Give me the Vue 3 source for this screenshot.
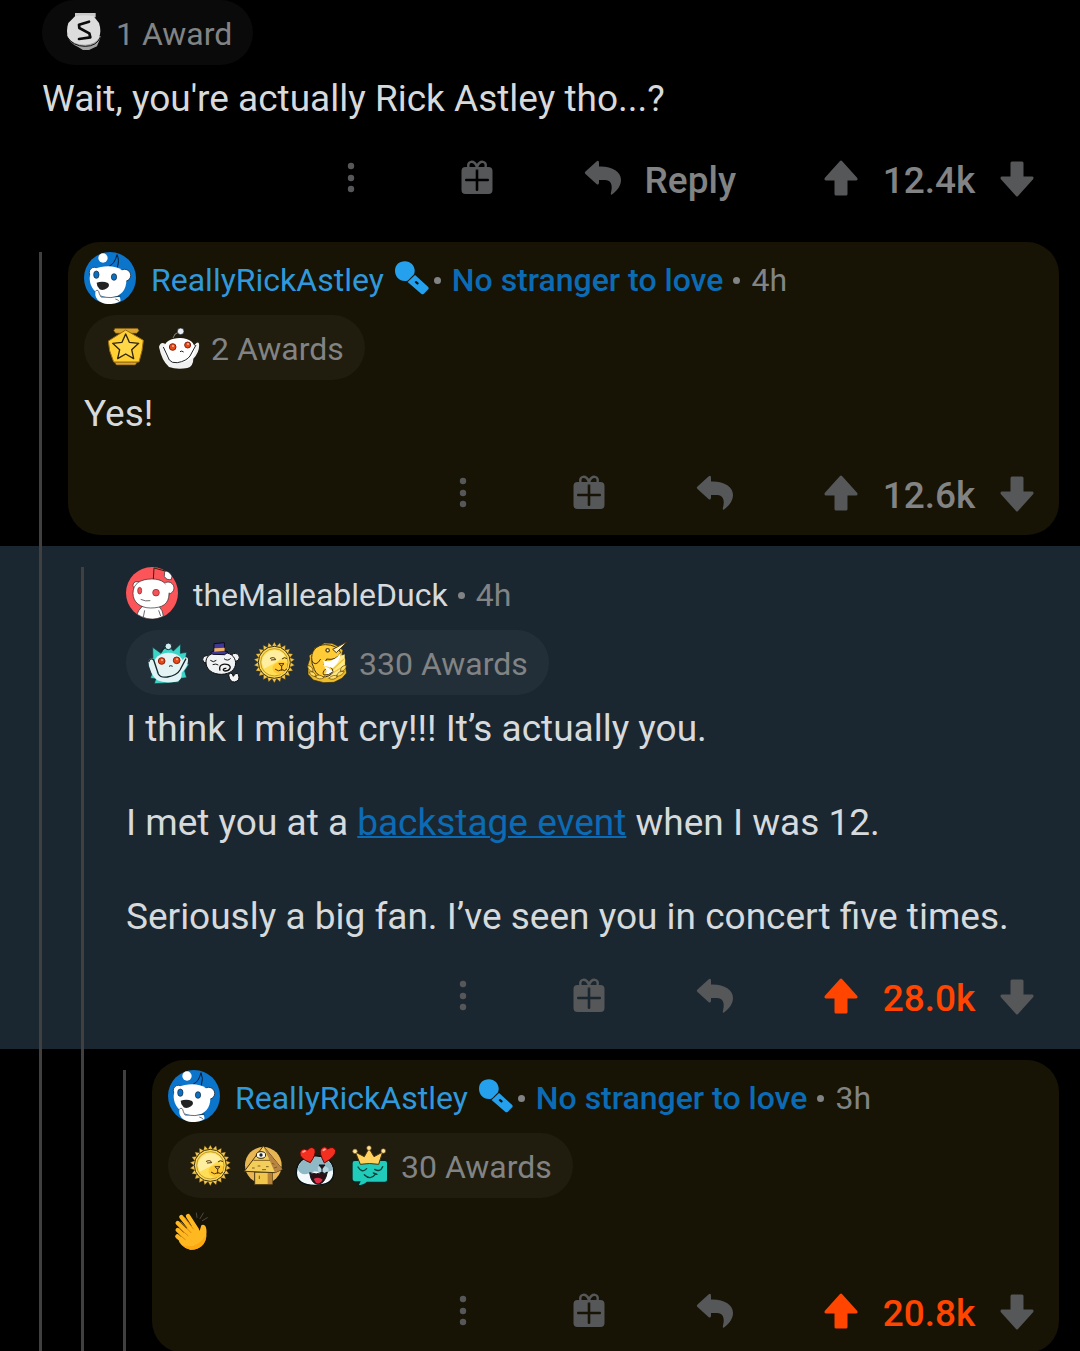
<template>
  <svg class="sprite" aria-hidden="true">
    <symbol id="dots" viewBox="0 0 42 42">
      <circle cx="21" cy="9" r="3.2" /><circle cx="21" cy="21" r="3.2" /><circle cx="21" cy="32" r="3.2" />
    </symbol>
    <symbol id="gift" viewBox="0 0 42 42">
      <path d="M12.5 11c-2-8 6-8 8.5-1 2.5-7 10.5-7 8.5 1" fill="none" stroke="currentColor" stroke-width="2.5" />
      <path fill-rule="evenodd" d="M9.500 10h23q4 0 4 4v19q0 4-4 4h-23q-4 0-4-4V14q0-4 4-4zM19.700 13v8.700H10q-1 0-1 1.300t1 1.300h9.700V33q0 1 1.300 1t1.300-1v-8.700H32q1 0 1-1.300t-1-1.300h-9.700V13q0-1-1.300-1t-1.300 1z" />
    </symbol>
    <symbol id="reply" viewBox="0 0 42 42">
      <path d="M3.500 14.500 14.500 4.500q2.500-2 2.500 1.500v3.500c13-.5 22 5 22 13.500 0 5-3 10-9 14.500q-1.500.6-1.200-1c1.500-5.500 2.200-13-5.500-13.500H17V26q-.5 2.500-2.500 1L3.500 17q-1.500-1.200 0-2.500z" />
    </symbol>
    <symbol id="up" viewBox="0 0 42 42">
      <path d="M20 4q1-1 2 0L37.300 21q.8 2.500-1.300 2.500H27.500V37q0 1.500-1.500 1.500H16q-1.500 0-1.500-1.500V23.500H6Q4 23.500 4.700 21z" />
    </symbol>
    <symbol id="down" viewBox="0 0 42 42">
      <path d="M20 39q1 1 2 0L37.300 22q.8-2.500-1.300-2.500H27.500V6q0-1.500-1.500-1.500H16q-1.500 0-1.500 1.500V19.500H6Q4 19.500 4.700 22z" />
    </symbol>
    <symbol id="mic" viewBox="0 0 100 100">
      <path d="M29 1c17 0 29 13 29 28 0 4-1 7-2 10L38 57c-3 1-6 2-9 2C12 59 0 46 0 29S12 1 29 1z" />
      <path fill-rule="evenodd" d="m59 41 38 35q4 4 0 8L85 96q-4 4-8 0L37 62zM59 60q-2 2 0 4l6 5q3 1 4-1t0-4l-6-5q-2-1-4 1z" />
    </symbol>

    <symbol id="avatar-rick" viewBox="0 0 156 156">
      <circle cx="78" cy="78" r="78" fill="#0b74cb" />
      <path d="M76 42Q92 36 99 8q8 16 1 38" fill="none" stroke="#0b1a30" stroke-width="3" />
      <circle cx="57" cy="18" r="14" fill="#fff" />
      <g fill="#fff" stroke="#111" stroke-width="2">
        <circle cx="31" cy="61" r="15" /><circle cx="122" cy="70" r="18" />
      </g>
      <path d="M17 78C18 54 42 43 72 43c34 0 54 15 55 40 1 30-16 50-46 53-36 1-64-24-64-58z" fill="#fff" />
      <path d="M34 112q6-6 12 4l7 18 54 1q5 11 0 14-26 12-51 4-20-8-22-24z" fill="#fff" />
      <ellipse cx="37" cy="68" rx="8" ry="11" fill="#0b70c4" stroke="#123" stroke-width="2" />
      <ellipse cx="90" cy="75" rx="8" ry="10" fill="#0b70c4" stroke="#123" stroke-width="2" />
      <path d="M38 92q18-6 34 1 7 8-3 16-12 8-22 3-9-8-9-20z" fill="#222" />
      <path d="M34 118q9-9 12 7l5 10q30 5 59-3M94 141q8 1 12 8" fill="none" stroke="#222" stroke-width="2" />
    </symbol>
    <symbol id="avatar-duck" viewBox="0 0 156 156">
      <circle cx="78" cy="78" r="78" fill="#fb5559" />
      <path d="M82 36 84 3 118 12" fill="none" stroke="#321" stroke-width="3" />
      <path d="M116 13q12-3 22 14l-2 10q-14 4-21-9z" fill="#fff" stroke="#222" stroke-width="2" />
      <path d="M33 142q4-13 16-24h50q12 12 13 30-32 16-66 1z" fill="#fff" stroke="#222" stroke-width="2" />
      <g fill="#fff" stroke="#222" stroke-width="2">
        <circle cx="33" cy="56" r="12" /><circle cx="126" cy="63" r="18" />
        <path d="M21 79C21 50 43 36 78 36c31 0 51 15 51 44 0 31-20 43-55 43-32 0-53-18-53-44z" />
      </g>
      <path d="M118 47q18 2 22 18-4 9-14 14" fill="#fff" />
      <ellipse cx="41" cy="71" rx="6" ry="10" fill="#f25358" stroke="#822" stroke-width="2" />
      <circle cx="90" cy="77" r="10" fill="#f25358" stroke="#822" stroke-width="2" />
      <path d="M44 97q14 7 29 4M56 130l-4 20M98 130l6 17" fill="none" stroke="#222" stroke-width="2" />
    </symbol>

    <symbol id="silver" viewBox="0 0 126 126">
      <path d="M36 3h62v13H36z" fill="#c9c9c9" />
      <path d="M12 68q6 24 32 36l16 10h18l24-11 12-30z" fill="#a2a2a2" />
      <path d="M36 13q26-7 56 0l16 20q8 24 0 45-12 18-41 20-35 1-51-20-8-20 0-45z" fill="#ddd" />
      <path d="M12 74q18 29 55 29 34 0 46-29" fill="none" stroke="#111" stroke-width="3" />
      <path d="M78 29 48 38l1 10 30 16 3 12-34 5" fill="none" stroke="#0b0b0b" stroke-width="8" stroke-linecap="round" stroke-linejoin="round" />
    </symbol>
    <symbol id="gold" viewBox="0 0 126 126">
      <path d="M30 4h68l4 7-7 8H32l-6-8zM28 105h69l-6 9H34z" fill="#d8a531" stroke="#6d4a0b" stroke-width="2" />
      <path d="m62 9 53 31-4 31-9 34H26L14 71 10 42z" fill="#ffd034" stroke="#9b6b10" stroke-width="3" stroke-linejoin="round" />
      <path d="m62 21 11 25 28 3-21 19 6 27-24-14-24 14 6-27-21-19 28-3z" fill="#ffd747" stroke="#30240c" stroke-width="4" stroke-linejoin="round" />
    </symbol>
    <symbol id="wave" viewBox="0 0 126 126">
      <path d="M45 33q4-15 18-18" fill="none" stroke="#bbb" stroke-width="2" />
      <circle cx="68" cy="13" r="10" fill="#e8eef3" stroke="#15191d" stroke-width="2" />
      <path d="M3 60q4-16 18-10l12 46q35 18 61-8l16-35q10-12 13-3 3 24-17 45 0 23-18 28-32 5-55-3Q11 101 3 60z" fill="#f1f1f1" />
      <path d="M18 68C17 43 40 33 66 33c29 0 45 15 45 34 0 23-16 39-43 39-29 0-49-12-50-38z" fill="#fff" />
      <path d="m16 60 18 39q7 10 24 8 28-5 38-20l18-33" fill="none" stroke="#202427" stroke-width="3" />
      <g fill="#e64a19" stroke="#8d1f0a" stroke-width="3">
        <circle cx="44" cy="60" r="10" /><circle cx="89" cy="54" r="9" />
      </g>
      <circle cx="45" cy="57" r="3" fill="#ffb9a0" /><circle cx="90" cy="51" r="3" fill="#ffb9a0" />
      <path d="M66 74q5-4 11 1" fill="none" stroke="#222" stroke-width="3" />
    </symbol>
    <symbol id="teal-wave" viewBox="0 0 126 126">
      <path d="m18 61-1-45 25 18L58 5l21 22 22-21-1 28 19-3-5 30 12 6-13 20 6 20-17 2-8 12-72 4 4-14-16-3 6-16L3 68z" fill="#3cd6c8" stroke="#10373b" stroke-width="2" />
      <path d="M4 58q5-14 17-7l8 42q35 18 65-8l14-32q8-13 15-3 2 22-19 42 2 24-18 27-32 6-55-4Q8 97 4 58z" fill="#e1f3f4" />
      <ellipse cx="65" cy="69" rx="46" ry="37" fill="#e4f4f5" />
      <path d="M5 60q5-15 15-6l14 42q7 12 27 9 29-5 38-21l18-34" fill="none" stroke="#12272b" stroke-width="4" />
      <path d="M43 29q6-13 19-14" fill="none" stroke="#17282c" stroke-width="4" />
      <circle cx="64" cy="13" r="10" fill="#d3eaf0" stroke="#14272b" stroke-width="3" />
      <g fill="#e64a19" stroke="#8d1f0a" stroke-width="3">
        <circle cx="44" cy="57" r="10" /><circle cx="89" cy="55" r="10" />
      </g>
      <circle cx="45" cy="54" r="3" fill="#ffb9a0" /><circle cx="90" cy="52" r="3" fill="#ffb9a0" />
      <path d="M66 73q5-4 11 0" fill="none" stroke="#222" stroke-width="3" />
    </symbol>
    <symbol id="tophat" viewBox="0 0 126 126">
      <path d="M86 99q3-10 10-4l4 8q8-14 15-6 7 19-11 23-15 1-18-21z" fill="#f4f4f4" stroke="#0b0d0f" stroke-width="3" />
      <g fill="#f1f2f3" stroke="#0b0d0f" stroke-width="3">
        <circle cx="19" cy="52" r="11" /><circle cx="106" cy="46" r="12" />
        <path d="M18 57c2-20 24-26 46-26 27 0 41 11 43 31 0 22-17 34-43 35-26 0-48-14-46-40z" />
      </g>
      <path d="m42 5 31-3 1 25 10 3-10 8-36-1-6-6 10-4z" fill="#413794" stroke="#0c0a20" stroke-width="3" />
      <path d="m43 19 31-2v9l-31 3z" fill="#edaf62" />
      <path d="M31 55q9 8 18 0M72 50q11 9 20-1M38 68q10-4 17 1" fill="none" stroke="#17191b" stroke-width="3" />
      <path d="M60 86c-5-17 9-22 24-18 13 6 5 19-9 19-9-1-5-9 4-8" fill="none" stroke="#111" stroke-width="4" />
    </symbol>
    <symbol id="sun" viewBox="0 0 126 126">
      <polygon :points="rays" fill="#f5c84c" stroke="#5a4211" stroke-width="1" />
      <circle cx="64" cy="61" r="48" fill="#fbd75a" stroke="#3b300d" stroke-width="3" />
      <circle cx="64" cy="61" r="41" fill="#ffde57" stroke="#a07a20" stroke-width="2" />
      <path d="M27 54q12-30 41-29 20 4 28 17L60 66 33 80q-8-12-6-26z" fill="#ffeea0" />
      <path d="M59 73q18-22 43-10 2 21-17 34-30 0-26-24z" fill="#ffc933" />
      <path d="M52 49q13-6 16 4l-13 1M88 50q6-6 13-1M79 65h14l-7 7zM86 72v13M67 82q10 9 19 1 10 6 15-1" fill="none" stroke="#49310c" stroke-width="3" stroke-linecap="round" stroke-linejoin="round" />
    </symbol>
    <symbol id="narwhal" viewBox="0 0 126 126">
      <path d="m6 67 5-16-2-10 14-12 2-11 13-3L54 3l24 1 19 9 14 12-3 12 11 16-1 17 4 23-14 16-24 12-31 1-31-8L6 97z" fill="#eebd2c" stroke="#2d250b" stroke-width="2" />
      <path d="M45 106 66 60l50-23v44l-24 25z" fill="#ffeb8c" />
      <path d="m60 101 54-50M64 103l50-31M57 95l43-55" stroke="#f2c23c" stroke-width="4" />
      <path d="M18 57C12 29 31 8 58 8q34 0 46 24-14 25-42 19l-8 17q26 3 27 22-9 16-34 15-21-11-25-32-5-7-4-16z" fill="#ffcc38" stroke="#433314" stroke-width="3" />
      <path d="M49 53q28 16 55-21-3 31-25 46-18-6-26-7 4-11-4-18zM54 72q20 8 27 18-9 11-23 5 9-7-4-23z" fill="#fff" />
      <path d="M17 56q12 21 27-5M59 81q-12 10-5 18 14 2 26-9" fill="none" stroke="#433314" stroke-width="3" />
      <path d="m80 22 44-23-33 33z" fill="#fff2b6" stroke="#453719" stroke-width="3" />
      <circle cx="65" cy="25" r="7" fill="#604c19" /><circle cx="65" cy="25" r="3" fill="#fff" />
      <g fill="#ffdc66" stroke="#61470c" stroke-width="2">
        <path d="M4 71q17 0 17 18Q7 87 4 71zM9 90q17-4 22 14-16 0-22-14zM26 103q16-9 28 4-14 9-28-4zM103 88q1-18 18-18-1 17-18 18zM91 103q5-18 24-14-8 14-24 14zM68 109q14-14 28-6-13 14-28 6z" />
      </g>
    </symbol>
    <symbol id="pyramid" viewBox="0 0 126 126">
      <circle cx="64" cy="61" r="55" fill="#e8b653" />
      <path d="M38 81h53v38H38z" fill="#f0c64c" stroke="#4a3711" stroke-width="3" />
      <path d="M77 83h14v34H77z" fill="#b98336" />
      <path d="M64 3 121 73l-22 10L7 79z" fill="#f4ce5a" stroke="#47340f" stroke-width="3" stroke-linejoin="round" />
      <path d="m64 3 57 70-22 10z" fill="#b88443" />
      <path d="M34 46h50M47 63h8m17 2h8M30 69h8M60 74h12M90 55l7 3M96 69l9-3M52 92v10" stroke="#80601d" stroke-width="3" />
      <ellipse cx="57" cy="30" rx="14" ry="10" fill="#fff9e8" stroke="#31250d" stroke-width="3" />
      <circle cx="57" cy="30" r="5" fill="#182631" />
    </symbol>
    <symbol id="seal" viewBox="0 0 126 126">
      <path d="M4 84c0-30 20-51 58-51s56 22 54 53c-2 25-22 35-55 35S5 110 4 84z" fill="#f4fafb" stroke="#091214" stroke-width="4" />
      <path d="M8 72c6-25 27-37 54-37 28 0 48 14 52 40-25 15-46 0-61 6-18 8-36 12-45-9z" fill="#8fb9c5" />
      <path d="M68 66q16-9 32 3 5 13-12 19-21-1-20-22z" fill="#b8d4de" />
      <path d="M72 60h18l-9 11zM81 70v12q-16 9-37 1 4 35 27 35 20-4 26-37-8 8-16 1" fill="#2a1014" stroke="#0d191d" stroke-width="3" stroke-linejoin="round" />
      <path d="M56 102q14-9 27 2-9 15-20 10z" fill="#e12b43" />
      <g fill="#f3301f" stroke="#5a0809" stroke-width="3">
        <path d="M46 53Q12 40 15 23 21 6 37 15q14-15 23-1 4 14-14 39zM88 54Q72 24 77 14 87-2 98 12q17-11 24 5 1 17-34 37z" />
      </g>
      <path d="m24 21 6-3M85 16l5-3" stroke="#ffb0a7" stroke-width="5" stroke-linecap="round" />
    </symbol>
    <symbol id="crown" viewBox="0 0 126 126">
      <path d="M20 46h91q8 0 8 8v50q0 8-8 8H58q-10 10-29 11l6-12H20q-8-1-8-8V54q0-8 8-8z" fill="#20cbb9" stroke="#062421" stroke-width="4" />
      <path d="m37 58-15-37 27 14L63 10l15 25 26-14-12 37q-28-5-55 0z" fill="#ffd15e" stroke="#493310" stroke-width="3" stroke-linejoin="round" />
      <g fill="#ffe39a" stroke="#6f501a" stroke-width="2">
        <circle cx="21" cy="19" r="7" /><circle cx="63" cy="9" r="7" /><circle cx="106" cy="18" r="7" />
      </g>
      <path d="M30 66q12 20 26 5M80 73q16 10 24-8M49 89q18 19 35-3M76 84l11 4" fill="none" stroke="#073f3a" stroke-width="4" stroke-linecap="round" />
    </symbol>
    <symbol id="clap" viewBox="0 0 102 114">
      <path d="M69 16 67 3M78 20 88 3M85 26l15-9" stroke="#4b4b49" stroke-width="3" stroke-linecap="round" />
      <g fill="none" stroke="#ffb820" stroke-width="13" stroke-linecap="round">
        <path d="m42 12 27 42M22 15l38 48M11 33l42 42M11 54l34 32M10 73l30 26" />
      </g>
      <path d="m62 36 15 20 5-16q5-5 12 2 5 9 3 27 0 20-14 33-13 12-34 11-15-3-27-15l-7-9 19-37z" fill="#ffb820" />
      <path d="m32 17 26 34M20 30l31 32M16 48l26 23M15 67l19 16" fill="none" stroke="#d98a14" stroke-width="3" stroke-linecap="round" />
      <path d="M97 69q0 20-14 33-13 12-34 11-15-3-27-15 44 18 75-29z" fill="#fba811" />
    </symbol>
  </svg>

  <main class="thread">
    <article v-for="comment in comments" :key="comment.id" class="comment" :class="comment.kind">
      <span v-for="n in comment.depth" :key="n" class="rail" :class="{ start: n === comment.depth }"></span>
      <div class="card">
        <header v-if="comment.author" class="author">
          <svg class="avatar" aria-hidden="true"><use :href="'#' + comment.avatar" /></svg>
          <p class="meta">
            <a href="#" class="name">{{ comment.author }}</a>
            <template v-if="comment.flair">
              <svg class="mic" aria-hidden="true"><use href="#mic" /></svg>
              <span class="dot"></span>
              <strong class="flair">{{ comment.flair }}</strong>
            </template>
            <span class="dot"></span>
            <span>{{ comment.age }}</span>
          </p>
        </header>

        <button type="button" class="awards">
          <svg v-for="award in comment.awards" :key="award" class="award" aria-hidden="true"><use :href="'#' + award" /></svg>
          <span>{{ comment.awardText }}</span>
        </button>

        <div class="text">
          <p v-for="(parts, i) in comment.text" :key="i">
            <template v-for="(part, j) in parts" :key="j">
              <a v-if="part.type === 'link'" href="#">{{ part.value }}</a>
              <svg v-else-if="part.type === 'clap'" class="emoji" role="img" aria-label="Clapping hands"><use href="#clap" /></svg>
              <template v-else>{{ part }}</template>
            </template>
          </p>
        </div>

        <footer class="actions">
          <button type="button" aria-label="More options"><svg><use href="#dots" /></svg></button>
          <button type="button" aria-label="Give award"><svg><use href="#gift" /></svg></button>
          <button type="button" aria-label="Reply">
            <svg><use href="#reply" /></svg>
            <span v-if="comment.depth === 0" class="reply">Reply</span>
          </button>
          <div class="votes" :class="{ voted: comment.voted }">
            <button type="button" class="upvote" aria-label="Upvote"><svg><use href="#up" /></svg></button>
            <span class="score">{{ comment.score }}</span>
            <button type="button" aria-label="Downvote"><svg><use href="#down" /></svg></button>
          </div>
        </footer>
      </div>
    </article>
  </main>
</template>

<script setup>
// zigzag outline of the sun award, 22 rays
const rays = Array.from({ length: 44 }, (_, i) => {
  const r = i % 2 ? 49 : 61
  const a = (i * Math.PI) / 22
  return `${(64 + r * Math.sin(a)).toFixed(1)},${(61 - r * Math.cos(a)).toFixed(1)}`
}).join(' ')

const comments = [
  {
    id: 1,
    depth: 0,
    kind: 'first',
    awards: ['silver'],
    awardText: '1 Award',
    text: [["Wait, you're actually Rick Astley tho...?"]],
    score: '12.4k'
  },
  {
    id: 2,
    depth: 1,
    kind: 'golden',
    author: 'ReallyRickAstley',
    avatar: 'avatar-rick',
    flair: 'No stranger to love',
    age: '4h',
    awards: ['gold', 'wave'],
    awardText: '2 Awards',
    text: [['Yes!']],
    score: '12.6k'
  },
  {
    id: 3,
    depth: 2,
    kind: 'selected',
    author: 'theMalleableDuck',
    avatar: 'avatar-duck',
    age: '4h',
    awards: ['teal-wave', 'tophat', 'sun', 'narwhal'],
    awardText: '330 Awards',
    text: [
      ['I think I might cry!!! It’s actually you.'],
      ['I met you at a ', { type: 'link', value: 'backstage event' }, ' when I was 12.'],
      ['Seriously a big fan. I’ve seen you in concert five times.']
    ],
    score: '28.0k',
    voted: true
  },
  {
    id: 4,
    depth: 3,
    kind: 'golden',
    author: 'ReallyRickAstley',
    avatar: 'avatar-rick',
    flair: 'No stranger to love',
    age: '3h',
    awards: ['sun', 'pyramid', 'seal', 'crown'],
    awardText: '30 Awards',
    text: [[{ type: 'clap' }]],
    score: '20.8k',
    voted: true
  }
]
</script>

<style>
body {
  margin: 0;
  background: #000;
}
</style>

<style scoped>
.sprite {
  position: absolute;
  width: 0;
  height: 0;
}

.thread {
  font-family: Roboto, "Liberation Sans", sans-serif;
  color: #d7dadc;
  background: #000;
}

.comment {
  display: flex;
}

.selected {
  background: #1b2730;
}

.rail {
  flex: none;
  width: 3px;
  margin-left: 39px;
  background: #404040;
}

.rail.start {
  margin-top: 21px;
}

.card {
  flex: 1;
  min-width: 0;
  margin: 11px 21px 11px 26px;
  padding: 10px 21px 22px 16px;
  border-radius: 32px;
}

.first .card {
  margin-top: 0;
  padding-top: 0;
}

.golden .card {
  background: #171305;
}

.author {
  display: flex;
  align-items: center;
  gap: 15px;
  margin-bottom: 11px;
}

.avatar {
  flex: none;
  width: 52px;
  height: 52px;
}

.meta {
  display: flex;
  align-items: center;
  margin: 0;
  padding-top: 4px;
  font-size: 32px;
  line-height: 40px;
  color: #818384;
}

.name {
  color: #d7dadc;
  text-decoration: none;
}

.golden .name {
  color: #2f99dc;
}

.mic {
  width: 34px;
  height: 34px;
  margin: 0 -5px 4px 11px;
  fill: #24a0ed;
}

.dot {
  width: 7px;
  height: 7px;
  margin: 0 11px 0 10px;
  border-radius: 50%;
  background: #818384;
}

.flair {
  font-weight: 500;
  color: #0b6bb5;
}

button {
  display: flex;
  align-items: center;
  padding: 0;
  border: 0;
  background: none;
  font-family: inherit;
  color: #565758;
  cursor: pointer;
}

.awards {
  gap: 11px;
  height: 65px;
  padding: 0 21px;
  border-radius: 33px;
  background: rgba(255, 255, 255, 0.04);
  font-size: 32px;
  line-height: 40px;
  color: #818384;
}

.awards span {
  padding-top: 2px;
}

.award {
  width: 42px;
  height: 42px;
}

.text {
  margin: 10px 0 36px;
  font-size: 37px;
  line-height: 47px;
}

.text p {
  margin: 0 0 47px;
}

.text p:last-child {
  margin-bottom: 0;
}

.text a {
  color: #0b6bb5;
  text-decoration-thickness: 2px;
}

.emoji {
  display: block;
  width: 34px;
  height: 38px;
  padding: 4px 6px 5px;
}

.actions {
  display: flex;
  justify-content: flex-end;
  gap: 84px;
  height: 40px;
  align-items: center;
}

.actions svg {
  width: 42px;
  height: 42px;
  fill: currentColor;
}

.reply,
.score {
  padding-top: 5px;
  font-size: 37px;
  font-weight: 500;
  line-height: 42px;
  color: #818384;
}

.reply {
  margin-left: 21px;
}

.votes {
  display: flex;
  align-items: center;
}

.score {
  width: 134px;
  text-align: center;
}

.voted .upvote,
.voted .score {
  color: #ff4500;
}
</style>
